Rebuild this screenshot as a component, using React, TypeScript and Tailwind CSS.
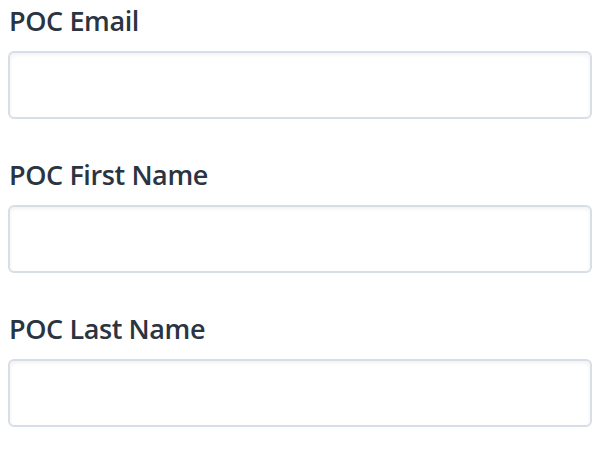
import React from 'react';

const FIELDS = ['POC Email', 'POC First Name', 'POC Last Name'];

export default function App() {
  return (
    <div
      className="w-[610px] h-[452px] bg-white px-2 pt-[4px]"
      style={{ fontFamily: '"Open Sans", "Noto Sans", sans-serif' }}
    >
      {FIELDS.map((label) => (
        <div key={label} className="mb-[39px]">
          <label className="block text-[27px] leading-[34px] font-semibold text-[#2b3441] pl-[1px] tracking-[-0.4px]">
            {label}
          </label>
          <input
            type="text"
            className="mt-[13px] block w-[584px] h-[68px] rounded-[6px] border-2 border-[#d8dee7] bg-white shadow-[inset_0_2px_4px_rgba(0,0,0,0.06)] outline-none"
          />
        </div>
      ))}
    </div>
  );
}
